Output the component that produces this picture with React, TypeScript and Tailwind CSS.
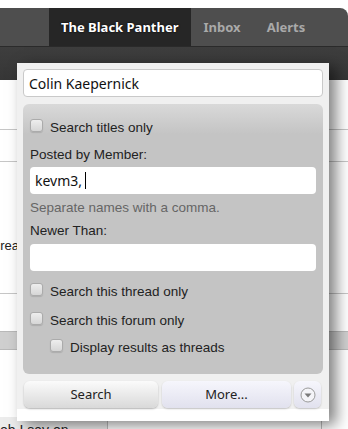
import React from 'react';

const arial = { fontFamily: '"Liberation Sans", Arial, sans-serif' };
const noto = { fontFamily: '"Noto Sans", "Open Sans", sans-serif' };

function Check({ label, indent = false }: { label: string; indent?: boolean }) {
  return (
    <div className={`flex h-[18px] items-start gap-[7px] ${indent ? 'ml-[20px]' : ''}`}>
      <span className="mt-[2px] block h-[13px] w-[13px] shrink-0 rounded-[3px] border border-[#ababab] bg-[linear-gradient(to_bottom,#eeeeee,#d6d6d6)] shadow-[0_1px_1px_rgba(0,0,0,0.12)]" />
      <span className="pt-[2px] text-[13.5px] leading-[18px] text-[#222]" style={arial}>
        {label}
      </span>
    </div>
  );
}

export default function App() {
  return (
    <div className="relative h-[429px] w-[348px] overflow-hidden bg-white">
      {/* top nav */}
      <div className="h-[8px] bg-white" />
      <nav
        className="flex h-[39px] items-stretch rounded-tr-[8px] border-b border-[#2b2b2b] bg-[#4e4e4e] pl-[49px]"
        style={noto}
      >
        <a className="flex items-center bg-[#262626] px-[12px] pt-[2px] text-[13px] font-bold text-white [text-shadow:0_0_2px_#000]">
          The Black Panther
        </a>
        <a className="flex items-center px-[13px] pt-[2px] text-[13px] font-bold text-[#a9a9a9]">Inbox</a>
        <a className="flex items-center px-[13px] pt-[2px] text-[13px] font-bold text-[#a9a9a9]">Alerts</a>
      </nav>
      <div className="h-[33px] bg-[linear-gradient(to_bottom,#3e3e3e,#363636)]" />

      {/* page behind the popup */}
      <div className="text-[13px] text-[#222]" style={arial}>
        <div className="h-[50px] border-b border-[#c6c6c6]" />
        <div className="h-[32px] border-b border-[#c6c6c6]" />
        <div className="h-[132px] border-b border-[#c6c6c6] pt-[74px]">
          <span className="-ml-[15px]">Threads</span>
        </div>
        <div className="h-[37px]" />
        <div className="h-[19px] border-y border-[#b9b9b9] bg-[#cfcfcf]" />
        <div className="h-[67px]" />
        <div className="flex h-[20px] text-[14px]">
          <span className="w-[108px] border-r border-[#bdbdbd] bg-[#ececec] pt-[3px]">ob I say on</span>
          <span className="w-[214px] border-r border-[#bdbdbd]" />
        </div>
      </div>

      {/* search popup */}
      <div className="absolute left-[17px] top-[63px] w-[312px] bg-[#f0f0f0] shadow-[7px_4px_14px_rgba(0,0,0,0.5)]">
        <div className="px-[6px] pt-[6px]">
          <div
            className="flex h-[28px] items-center rounded-[4px] border border-[#c9c9c9] bg-white pl-[5px] text-[14px] text-[#111]"
            style={noto}
          >
            Colin Kaepernick
          </div>

          <div className="mt-[7px] h-[270px] rounded-[6px] bg-[linear-gradient(to_bottom,#d9d9d9,#c4c4c4_30px,#c4c4c4)] px-[7px] pt-[13px]">
            <Check label="Search titles only" />

            <div className="mt-[11px] h-[18px] text-[13.5px] leading-[18px] text-[#222]" style={arial}>
              Posted by Member:
            </div>
            <div
              className="mt-[3px] flex h-[27px] items-center rounded-[4px] bg-white pl-[5px] text-[14px] text-[#111]"
              style={noto}
            >
              kevm3,
              <span className="ml-[3px] inline-block h-[17px] w-px bg-black" />
            </div>
            <div className="mt-[5px] h-[18px] text-[13.5px] leading-[18px] text-[#666]" style={arial}>
              Separate names with a comma.
            </div>

            <div className="mt-[5px] h-[18px] text-[13.5px] leading-[18px] text-[#222]" style={arial}>
              Newer Than:
            </div>
            <div className="mt-[4px] h-[27px] rounded-[4px] bg-white" />

            <div className="mt-[10px] flex flex-col gap-[11px]">
              <Check label="Search this thread only" />
              <Check label="Search this forum only" />
            </div>
            <div className="mt-[9px]">
              <Check label="Display results as threads" indent />
            </div>
          </div>

          <div className="mt-[7px] flex h-[27px] gap-[3px] pl-[1px] text-[13px] text-[#222]" style={noto}>
            <button className="flex w-[134px] items-center justify-center rounded-[6px] bg-[linear-gradient(to_bottom,#fbfbfb,#d9d9d9)] shadow-[0_1px_2px_rgba(0,0,0,0.25)]">
              Search
            </button>
            <button className="ml-[1px] flex w-[129px] items-center justify-center rounded-[6px] bg-[linear-gradient(to_bottom,#f6f6fc,#e1e1ee)] shadow-[0_1px_2px_rgba(0,0,0,0.2)]">
              More...
            </button>
            <button className="flex w-[27px] items-center justify-center rounded-[6px] bg-[linear-gradient(to_bottom,#f6f6fc,#e1e1ee)] shadow-[0_1px_2px_rgba(0,0,0,0.2)]">
              <svg width="16" height="16" viewBox="0 0 16 16">
                <circle cx="8" cy="8" r="7" fill="#f4f4f8" stroke="#9a9a9a" strokeWidth="1" />
                <path d="M4.5 6.5 L11.5 6.5 L8 10.5 Z" fill="#7a7a7a" />
              </svg>
            </button>
          </div>
        </div>
        <div className="mt-[1px] h-[12px] bg-white" />
      </div>
    </div>
  );
}
